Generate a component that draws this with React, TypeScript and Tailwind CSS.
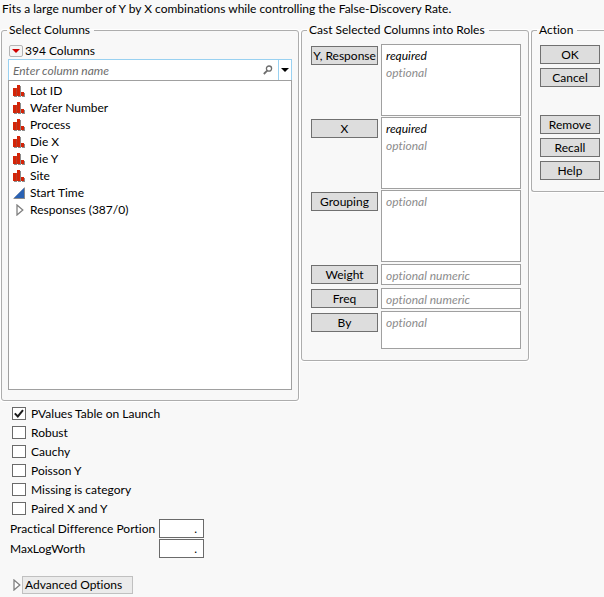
import { ReactNode, useState } from 'react';

interface Column {
  name: string;
  type: 'nominal' | 'continuous';
}

interface Role {
  label: string;
  hints: string[];
  size: 'tall' | 'line' | 'short';
}

const columns: Column[] = [
  { name: 'Lot ID', type: 'nominal' },
  { name: 'Wafer Number', type: 'nominal' },
  { name: 'Process', type: 'nominal' },
  { name: 'Die X', type: 'nominal' },
  { name: 'Die Y', type: 'nominal' },
  { name: 'Site', type: 'nominal' },
  { name: 'Start Time', type: 'continuous' },
];

const roles: Role[] = [
  { label: 'Y, Response', hints: ['required', 'optional'], size: 'tall' },
  { label: 'X', hints: ['required', 'optional'], size: 'tall' },
  { label: 'Grouping', hints: ['optional'], size: 'tall' },
  { label: 'Weight', hints: ['optional numeric'], size: 'line' },
  { label: 'Freq', hints: ['optional numeric'], size: 'line' },
  { label: 'By', hints: ['optional'], size: 'short' },
];

const roleBox = {
  tall: 'h-[72px] mb-px',
  line: 'h-[21px] mt-px mb-0.5',
  short: 'h-[38px]',
};

const options = [
  'PValues Table on Launch',
  'Robust',
  'Cauchy',
  'Poisson Y',
  'Missing is category',
  'Paired X and Y',
];

function NominalIcon() {
  return (
    <svg className="w-3 h-3 shrink-0" viewBox="0 0 12 12" shapeRendering="crispEdges" aria-hidden="true">
      <path fill="#8c8c8c" d="M1 4h3v8H1zM5 1h3v11H5zM9 8h3v4H9z" />
      <path fill="#d42408" d="M0 3h3v8H0zM4 0h3v11H4zM8 7h3v4H8z" />
      <path fill="#b4402c" d="M3 3h1v8H3z" />
    </svg>
  );
}

function ContinuousIcon() {
  return (
    <svg className="w-3 h-3 shrink-0" viewBox="0 0 12 12" aria-hidden="true">
      <path fill="#8c8c8c" d="M12 0v12H0z" />
      <path fill="#2a62b4" d="M11 1v10H1z" />
    </svg>
  );
}

function Disclosure() {
  return (
    <svg className="w-2 h-3 shrink-0" viewBox="0 0 8 12" fill="#fff" stroke="#808080" strokeWidth="1.3" aria-hidden="true">
      <path d="M1 1v10L6.8 6z" />
    </svg>
  );
}

function Panel({ title, className, children }: { title: string; className: string; children: ReactNode }) {
  return (
    <fieldset className={`min-w-0 border-[#adadad] shadow-[0_0_0_1px_#fff] ${className}`}>
      <legend className="pl-0.5 pr-1 leading-4 whitespace-nowrap">{title}</legend>
      {children}
    </fieldset>
  );
}

function PushButton({ children, className = 'w-full' }: { children: ReactNode; className?: string }) {
  return (
    <button
      type="button"
      className={`h-[19px] border border-[#707070] bg-[#dddddd] leading-4 text-center whitespace-nowrap hover:bg-[#e5f1fb] ${className}`}
    >
      {children}
    </button>
  );
}

export default function App() {
  const [checked, setChecked] = useState<string[]>(['PValues Table on Launch']);

  const toggle = (name: string) =>
    setChecked((prev) => (prev.includes(name) ? prev.filter((n) => n !== name) : [...prev, name]));

  return (
    <main className="min-h-screen bg-[#f8f8f8] pb-[3px] text-black text-[12px] leading-4 font-['Lato','Open_Sans',sans-serif] [font-variant-ligatures:none]">
      <p className="px-0.5 pt-px pb-[5px] whitespace-nowrap">
        Fits a large number of Y by X combinations while controlling the False-Discovery Rate.
      </p>

      <div className="grid grid-cols-[298fr_228fr_73fr] items-start gap-0.5 pl-px">
        <Panel title="Select Columns" className="border rounded-[3px] px-[5px]">
          <div className="px-px pt-[5px] pb-2.5">
            <div className="flex items-center gap-0.5 h-4 pl-px">
              <button
                type="button"
                aria-label="Column options"
                className="flex items-center justify-center w-3.5 h-3 border border-[#b4b4b4] rounded-[2px] bg-[#f4f4f4]"
              >
                <svg className="w-2 h-1" viewBox="0 0 8 4" aria-hidden="true">
                  <path fill="#d00000" d="M0 0h8L4 4z" />
                </svg>
              </button>
              <span>394 Columns</span>
            </div>
            <div className="flex items-center h-[21px] border border-b-0 border-[#99d1f1] bg-white">
              <input
                type="text"
                aria-label="Enter column name"
                placeholder="Enter column name"
                className="flex-1 min-w-0 h-full px-1 italic outline-none placeholder:text-[#6b6b6b]"
              />
              <svg className="w-2.5 h-2.5 mr-[5px]" viewBox="0 0 10 10" fill="none" stroke="#6d6d6d" aria-hidden="true">
                <circle cx="6" cy="3.6" r="2.6" strokeWidth="1.3" />
                <path d="M4.2 5.6L.8 9" strokeWidth="1.8" />
              </svg>
              <button
                type="button"
                aria-label="Search options"
                className="flex items-center justify-center w-[13px] h-full border-l border-[#99d1f1]"
              >
                <svg className="w-2 h-1" viewBox="0 0 8 4" aria-hidden="true">
                  <path d="M0 0h8L4 4z" />
                </svg>
              </button>
            </div>
            <ul className="h-[310px] border border-[#a0a0a0] bg-white pl-1 pt-px overflow-hidden">
              {columns.map((column) => (
                <li key={column.name} className="flex items-center gap-[5px] h-[17px]">
                  {column.type === 'nominal' ? <NominalIcon /> : <ContinuousIcon />}
                  {column.name}
                </li>
              ))}
              <li>
                <button type="button" className="flex items-center gap-1.5 h-[17px] pl-[3px]">
                  <Disclosure />
                  Responses (387/0)
                </button>
              </li>
            </ul>
          </div>
        </Panel>

        <Panel title="Cast Selected Columns into Roles" className="border rounded-[3px] px-[5px]">
          <div className="pl-1 pr-0.5 pt-1.5 pb-[11px]">
            {roles.map((role) => (
              <div key={role.label} className="flex items-start gap-[3px]">
                <PushButton className="w-[67px] shrink-0 mt-0.5">{role.label}</PushButton>
                <div
                  role="listbox"
                  aria-label={role.label}
                  className={`flex-1 min-w-0 border border-[#a0a0a0] bg-white px-1 pt-0.5 italic leading-[17px] ${roleBox[role.size]}`}
                >
                  {role.hints.map((hint) => (
                    <div key={hint} className={hint === 'required' ? 'text-black' : 'text-[#8c8c8c]'}>
                      {hint}
                    </div>
                  ))}
                </div>
              </div>
            ))}
          </div>
        </Panel>

        <Panel title="Action" className="border border-r-0 rounded-l-[3px] pl-[5px] pr-1">
          <div className="flex flex-col gap-1 pl-[3px] pt-[7px]">
            <PushButton>OK</PushButton>
            <PushButton>Cancel</PushButton>
          </div>
          <div className="flex flex-col gap-1 pl-[3px] mt-7 pb-[11px]">
            <PushButton>Remove</PushButton>
            <PushButton>Recall</PushButton>
            <PushButton>Help</PushButton>
          </div>
        </Panel>
      </div>

      <div className="mt-[3px] pl-3">
        {options.map((option) => (
          <label key={option} className="flex items-center gap-[5px] h-[19px]">
            <span className="grid w-3.5 h-[13px]">
              <input
                type="checkbox"
                checked={checked.includes(option)}
                onChange={() => toggle(option)}
                className="peer appearance-none col-start-1 row-start-1 border border-[#6a6a6a] bg-white"
              />
              <svg
                className="hidden peer-checked:block col-start-1 row-start-1 w-3.5 h-[13px] pointer-events-none"
                viewBox="0 0 14 13"
                fill="none"
                stroke="#1c1c1c"
                strokeWidth="2"
                aria-hidden="true"
              >
                <path d="M2.8 6.4l3 3 5.2-6.2" />
              </svg>
            </span>
            {option}
          </label>
        ))}
      </div>

      <div className="grid grid-cols-[148px_45px] items-center gap-x-px gap-y-px pl-2.5 pt-px">
        <label htmlFor="portion" className="whitespace-nowrap">Practical Difference Portion</label>
        <input id="portion" type="text" defaultValue="." className="h-[19px] min-w-0 border border-[#6a6a6a] bg-white px-1.5 text-right" />
        <label htmlFor="worth">MaxLogWorth</label>
        <input id="worth" type="text" defaultValue="." className="h-[19px] min-w-0 border border-[#6a6a6a] bg-white px-1.5 text-right" />
      </div>

      <div className="flex items-center gap-px mt-[18px] pl-[13px]">
        <Disclosure />
        <button type="button" className="h-[18px] w-[111px] border border-[#c0c0c0] bg-[#ebebeb] pl-0.5 text-left leading-4 whitespace-nowrap">
          Advanced Options
        </button>
      </div>
    </main>
  );
}
